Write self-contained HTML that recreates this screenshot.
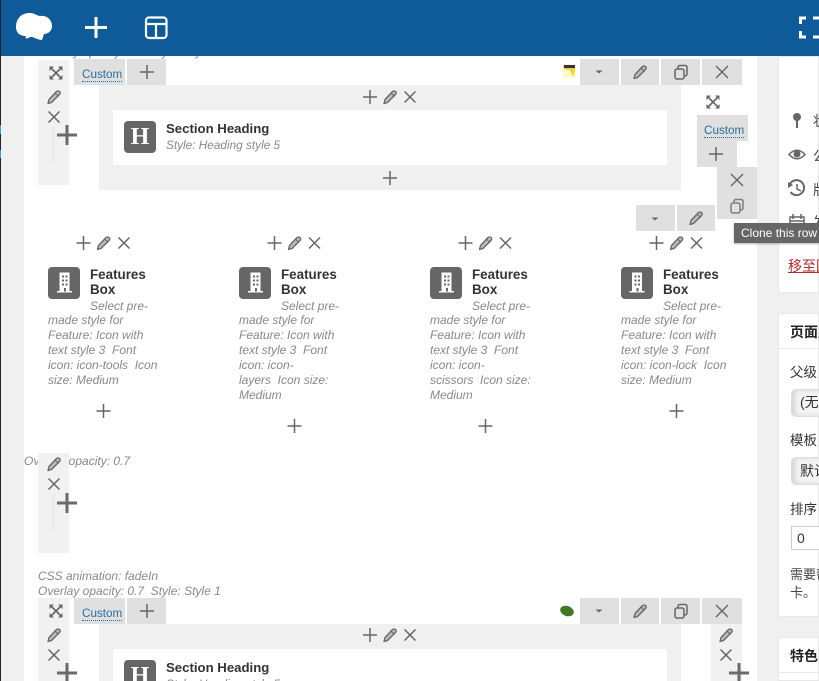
<!DOCTYPE html>
<html><head><meta charset="utf-8"><style>
html,body{margin:0;padding:0;width:819px;height:681px;overflow:hidden;background:#f0f0f1;font-family:"Liberation Sans","Noto Sans CJK SC",sans-serif}
#w0{position:relative;width:819px;height:681px;overflow:hidden;background:#f0f0f1}
.a{position:absolute}
.g{position:absolute;background:#e0e0e0}
.l{position:absolute;background:#f1f1f1}
.t{position:absolute;white-space:nowrap}
.cu{position:absolute;font-size:11.7px;color:#2a6f9f;border-bottom:1px dotted #2a6f9f;line-height:13px}
.h{position:absolute;font-size:13.2px;font-weight:bold;color:#333;white-space:nowrap}
.s{position:absolute;font-size:11.8px;font-style:italic;color:#888;white-space:nowrap}
.ft{position:absolute;font-size:13.4px;font-weight:bold;color:#333;line-height:15px;width:70px}
.d{position:absolute;font-size:12px;font-style:italic;color:#888;line-height:15px;white-space:nowrap}
.d span{position:relative;top:1px;margin-left:42px}
.z{position:absolute;font-size:14px;color:#444;white-space:nowrap}
</style></head><body><div id="w0">
<div class="a" style="left:0;top:0;width:1px;height:681px;background:#222"></div>
<div class="a" style="left:0;top:125px;width:1px;height:9px;background:#3aa0dc"></div>
<div class="a" style="left:0;top:150px;width:1px;height:8px;background:#3aa0dc"></div>
<div class="a" style="left:24px;top:56px;width:733px;height:625px;background:#fff"></div>
<div class="a" style="left:778px;top:56px;width:41px;height:237px;background:#fff;border:1px solid #e8e8e8;box-sizing:border-box"></div>
<div class="a" style="left:778px;top:313px;width:41px;height:304px;background:#fff;border:1px solid #e8e8e8;box-sizing:border-box"></div>
<div class="a" style="left:778px;top:637px;width:41px;height:44px;background:#fff;border:1px solid #e8e8e8;box-sizing:border-box"></div>
<div class="a" style="left:779px;top:348px;width:40px;height:1px;background:#e8e8e8"></div>
<div class="a" style="left:779px;top:672px;width:40px;height:1px;background:#e8e8e8"></div>

<div class="s" style="left:38px;top:45px;font-size:12px">Overlay opacity: 0.7 &nbsp;Style: Style 1</div>

<!-- row 1 -->
<div class="l" style="left:38px;top:60px;width:31px;height:125px"></div>
<div class="a" style="left:99px;top:85px;width:582px;height:105px;background:#f0f0f0"></div>
<div class="a" style="left:113px;top:110px;width:554px;height:55px;background:#fff"></div>
<div class="g" style="left:74px;top:59px;width:51px;height:26px"></div>
<div class="g" style="left:127px;top:59px;width:39px;height:26px"></div>
<div class="cu" style="left:82px;top:68px">Custom</div>
<div class="g" style="left:580px;top:59px;width:39px;height:26px"></div>
<div class="g" style="left:621px;top:59px;width:38px;height:26px"></div>
<div class="g" style="left:661px;top:59px;width:39px;height:26px"></div>
<div class="g" style="left:702px;top:59px;width:40px;height:26px"></div>
<div class="a" style="left:124px;top:121px;width:32px;height:32px;border-radius:4px;background:#666"></div>
<div class="t" style="left:124px;top:121px;width:32px;text-align:center;font:bold 24px/32px 'Liberation Serif',serif;color:#fff">H</div>
<div class="h" style="left:166px;top:121px">Section Heading</div>
<div class="s" style="left:166px;top:138px">Style: Heading style 5</div>

<div class="g" style="left:697px;top:115px;width:51px;height:26px"></div>
<div class="g" style="left:697px;top:141px;width:40px;height:26px"></div>
<div class="g" style="left:717px;top:167px;width:40px;height:52px"></div>
<div class="cu" style="left:704px;top:124px">Custom</div>
<div class="g" style="left:636px;top:205px;width:39px;height:26px"></div>
<div class="g" style="left:677px;top:205px;width:38px;height:26px"></div>

<!-- features -->
<div class="a" style="left:48px;top:267px;width:32px;height:32px;border-radius:4px;background:#666"></div>
<div class="ft" style="left:90px;top:267px">Features<br>Box</div>
<div class="d" style="left:48px;top:298px"><span>Select pre-</span><br>made style for<br>Feature: Icon with<br>text style 3 &nbsp;Font<br>icon: icon-tools &nbsp;Icon<br>size: Medium</div>
<div class="a" style="left:239px;top:267px;width:32px;height:32px;border-radius:4px;background:#666"></div>
<div class="ft" style="left:281px;top:267px">Features<br>Box</div>
<div class="d" style="left:239px;top:298px"><span>Select pre-</span><br>made style for<br>Feature: Icon with<br>text style 3 &nbsp;Font<br>icon: icon-<br>layers &nbsp;Icon size:<br>Medium</div>
<div class="a" style="left:430px;top:267px;width:32px;height:32px;border-radius:4px;background:#666"></div>
<div class="ft" style="left:472px;top:267px">Features<br>Box</div>
<div class="d" style="left:430px;top:298px"><span>Select pre-</span><br>made style for<br>Feature: Icon with<br>text style 3 &nbsp;Font<br>icon: icon-<br>scissors &nbsp;Icon size:<br>Medium</div>
<div class="a" style="left:621px;top:267px;width:32px;height:32px;border-radius:4px;background:#666"></div>
<div class="ft" style="left:663px;top:267px">Features<br>Box</div>
<div class="d" style="left:621px;top:298px"><span>Select pre-</span><br>made style for<br>Feature: Icon with<br>text style 3 &nbsp;Font<br>icon: icon-lock &nbsp;Icon<br>size: Medium</div>

<!-- row 2 -->
<div class="s" style="left:24px;top:454px;font-size:12px">Overlay opacity: 0.7</div>
<div class="l" style="left:38px;top:453px;width:31px;height:100px"></div>
<div class="s" style="left:38px;top:569px;font-size:12px;line-height:15px">CSS animation: fadeIn<br>Overlay opacity: 0.7 &nbsp;Style: Style 1</div>

<!-- row 3 -->
<div class="l" style="left:38px;top:598px;width:31px;height:83px"></div>
<div class="a" style="left:99px;top:624px;width:582px;height:57px;background:#f0f0f0"></div>
<div class="a" style="left:113px;top:649px;width:554px;height:32px;background:#fff"></div>
<div class="g" style="left:74px;top:598px;width:51px;height:26px"></div>
<div class="g" style="left:127px;top:598px;width:39px;height:26px"></div>
<div class="cu" style="left:82px;top:607px">Custom</div>
<div class="g" style="left:580px;top:598px;width:39px;height:26px"></div>
<div class="g" style="left:621px;top:598px;width:38px;height:26px"></div>
<div class="g" style="left:661px;top:598px;width:39px;height:26px"></div>
<div class="g" style="left:702px;top:598px;width:40px;height:26px"></div>
<div class="l" style="left:711px;top:624px;width:31px;height:57px"></div>
<div class="a" style="left:124px;top:660px;width:32px;height:32px;border-radius:4px;background:#666"></div>
<div class="t" style="left:124px;top:660px;width:32px;text-align:center;font:bold 24px/32px 'Liberation Serif',serif;color:#fff">H</div>
<div class="h" style="left:166px;top:660px">Section Heading</div>
<div class="s" style="left:166px;top:677px">Style: Heading style 5</div>

<!-- sidebar text -->
<div class="z" style="left:813px;top:111px">状态</div>
<div class="z" style="left:813px;top:146px">公开</div>
<div class="z" style="left:813px;top:180px">版本</div>
<div class="z" style="left:813px;top:212px">发布</div>
<div class="t" style="left:788px;top:256px;font-size:14px;color:#b32d2e;text-decoration:underline">移至回收站</div>
<div class="t" style="left:790px;top:322px;font-size:14px;font-weight:bold;color:#222">页面属性</div>
<div class="t" style="left:790px;top:361px;font-size:13.500px;color:#333">父级</div>
<div class="a" style="left:791px;top:389px;width:40px;height:28px;background:#f3f3f3;border:1px solid #ddd;border-radius:5px;box-sizing:border-box;box-shadow:inset 3px 0 4px #d5d5d5"></div>
<div class="t" style="left:800px;top:392px;font-size:14px;color:#333">(无父级)</div>
<div class="t" style="left:790px;top:429px;font-size:13.500px;color:#333">模板</div>
<div class="a" style="left:791px;top:457px;width:40px;height:28px;background:#f3f3f3;border:1px solid #ddd;border-radius:5px;box-sizing:border-box;box-shadow:inset 3px 0 4px #d5d5d5"></div>
<div class="t" style="left:800px;top:461px;font-size:14px;color:#333">默认模板</div>
<div class="t" style="left:790px;top:498px;font-size:13.500px;color:#333">排序</div>
<div class="a" style="left:791px;top:526px;width:40px;height:24px;background:#fff;border:1px solid #ccc;box-sizing:border-box"></div>
<div class="t" style="left:797px;top:530px;font-size:14px;color:#333">0</div>
<div class="t" style="left:790px;top:566px;font-size:13px;color:#444;line-height:18px">需要帮助？使用屏幕右上方的“帮助”选项<br>卡。</div>
<div class="t" style="left:790px;top:646px;font-size:14px;font-weight:bold;color:#222">特色图片</div>

<!-- icons -->
<svg class="a" style="left:0;top:0" width="819" height="681" viewBox="0 0 819 681">
<defs>
<g id="p"><path d="M-7 0H7M0-7V7" stroke="#666" stroke-width="1.5" fill="none"/></g>
<g id="P"><path d="M-10 0H10M0-10V10" stroke="#6a6a6a" stroke-width="3" fill="none"/></g>
<g id="x"><path d="M-5.500-5.500L5.500 5.500M5.500-5.500L-5.500 5.500" stroke="#666" stroke-width="1.5" fill="none"/></g>
<g id="e"><path d="M-6-6L6 6M6-6L-6 6" stroke="#666" stroke-width="1.4" fill="none"/></g>
<g id="w"><path d="M-6 6.500L-5 2.500L2.500-5.500Q4-6.500 5.500-5.500T5.500-2.500L-2.500 5.500Z" fill="#bbb" stroke="#666" stroke-width="1.300" stroke-linejoin="round"/><path d="M1-4L4.500-.5" stroke="#666" stroke-width="1"/></g>
<g id="c"><rect x="-6" y="-3" width="9" height="10" rx="2" fill="none" stroke="#666" stroke-width="1.5"/><path d="M-3-3V-4.500Q-3-6.500-1-6.500H4Q6-6.500 6-4.500V2Q6 4 3 4" fill="none" stroke="#666" stroke-width="1.5"/></g>
<g id="d"><path d="M-3.500-1.500H3.500L0 1.500Z" fill="#666"/></g>
<g id="f"><path d="M-6.500-6.500H-2L-6.500-2ZM6.500-6.500H2L6.500-2ZM-6.500 6.500H-2L-6.500 2ZM6.500 6.500H2L6.500 2Z" fill="#666"/><path d="M-5-5L5 5M5-5L-5 5" stroke="#666" stroke-width="1.6"/></g>
<g id="b"><path d="M-7.500 10.500H7.500V9H5V-9.500H-5V9H-7.500Z" fill="#fff"/><path d="M-2.500-6.500h2v2h-2zM1-6.500h2v2h-2zM-2.500-2.500h2v2h-2zM1-2.500h2v2h-2zM-2.500 1.500h2v2h-2zM1 1.500h2v2h-2zM-.5 6h2v3.500h-2z" fill="#666"/></g>
</defs>

<!-- top bar -->
<rect x="1" width="818" height="56" fill="#0f5a99"/>
<path d="M16 27C16 18 22 13 30 13C35 13 37 16 40 16C47 15 52 20 52 26C52 32 47 34 44 34L42 40C37 40 33 36 30 37C28 39 24 39 26 36C20 36 16 33 16 27Z" fill="#fff"/>
<path d="M85 27.500H107M96 17V38" stroke="#fff" stroke-width="3" fill="none"/>
<rect x="146" y="17.500" width="20.500" height="20.500" rx="3" fill="none" stroke="#fff" stroke-width="2.200"/>
<path d="M146 24H166M156 24V38" stroke="#fff" stroke-width="2.200" fill="none"/>
<path d="M800.500 24V18H806M800.500 31V37H806M813 18H819M813 37H819" stroke="#fff" stroke-width="3" fill="none"/>

<!-- row1 -->
<use href="#f" x="56" y="73"/><use href="#w" x="54" y="97"/><use href="#x" x="54" y="117"/>
<rect x="52" y="127" width="3" height="34" fill="#ebebeb"/><use href="#P" x="67" y="135"/>
<use href="#p" x="147" y="72"/>
<use href="#d" x="599" y="72"/><use href="#w" x="640" y="72"/><use href="#c" x="681" y="72"/><use href="#e" x="722" y="72"/>
<use href="#p" x="370" y="97"/><use href="#w" x="390" y="97"/><use href="#x" x="410" y="97"/><use href="#p" x="390" y="178"/>
<use href="#f" x="713" y="102"/><use href="#p" x="716" y="154"/><use href="#e" x="737" y="180"/>
<g opacity=".8"><use href="#c" x="737" y="206"/></g>
<use href="#d" x="655" y="219"/><use href="#w" x="696" y="218"/>

<!-- image thumbs -->
<rect x="563" y="64" width="13" height="14" fill="#fff8c8"/>
<path d="M563 66L575 65L575 69L573 77L570 70L564 69Z" fill="#f0d030"/><path d="M564 65H575V68H564Z" fill="#334"/>
<ellipse cx="567" cy="611" rx="7" ry="5" fill="#3d7a22" transform="rotate(20 567 611)"/>

<!-- feature controls -->
<use href="#p" x="83.500" y="243"/><use href="#w" x="103.500" y="243"/><use href="#x" x="124" y="243"/><use href="#p" x="103.500" y="411"/>
<use href="#p" x="274.500" y="243"/><use href="#w" x="294.500" y="243"/><use href="#x" x="314.500" y="243"/><use href="#p" x="294.500" y="426"/>
<use href="#p" x="465.500" y="243"/><use href="#w" x="485.500" y="243"/><use href="#x" x="505.500" y="243"/><use href="#p" x="485.500" y="426"/>
<use href="#p" x="656.500" y="243"/><use href="#w" x="676.500" y="243"/><use href="#x" x="696.500" y="243"/><use href="#p" x="676.500" y="411"/>
<use href="#b" x="64.500" y="282"/><use href="#b" x="255.500" y="282"/><use href="#b" x="446.500" y="282"/><use href="#b" x="637" y="282"/>

<!-- row2 -->
<use href="#w" x="54" y="464"/><use href="#x" x="54" y="484"/>
<rect x="52" y="495" width="3" height="34" fill="#ebebeb"/><use href="#P" x="67" y="503"/>

<!-- row3 -->
<use href="#f" x="56" y="611"/><use href="#w" x="54" y="635"/><use href="#x" x="54" y="655"/><use href="#P" x="67" y="673"/>
<use href="#p" x="147" y="611"/>
<use href="#d" x="599" y="611"/><use href="#w" x="640" y="611"/><use href="#c" x="681" y="611"/><use href="#e" x="722" y="611"/>
<use href="#p" x="370" y="635"/><use href="#w" x="390" y="635"/><use href="#x" x="410" y="635"/>
<use href="#w" x="726" y="635"/><use href="#x" x="726" y="655"/><use href="#P" x="739" y="673"/>

<!-- sidebar icons -->
<circle cx="797" cy="117" r="4" fill="#666"/><path d="M797 119V128" stroke="#666" stroke-width="2"/>
<path d="M789 154.500Q797 146 805 154.500Q797 163 789 154.500Z" fill="none" stroke="#666" stroke-width="1.500"/><circle cx="797" cy="154" r="3.500" fill="#666"/>
<path d="M790 184A7.500 7.500 0 1 1 790.500 192" fill="none" stroke="#666" stroke-width="2"/><path d="M788 182L793 185L788 188Z" fill="#666"/><path d="M797 184V189L801 191" fill="none" stroke="#666" stroke-width="1.500"/>
<path d="M790 217H804V230H790ZM793 214V219M801 214V219M790 221H804" fill="none" stroke="#666" stroke-width="1.500"/>
</svg>

<!-- tooltip -->
<div class="a" style="left:734px;top:223px;width:85px;height:20px;background:#666;box-shadow:0 1px 2px rgba(0,0,0,.3)"></div>
<div class="t" style="left:741px;top:226px;font-size:12px;color:#fff;line-height:14px">Clone this row</div>
</div></body></html>
